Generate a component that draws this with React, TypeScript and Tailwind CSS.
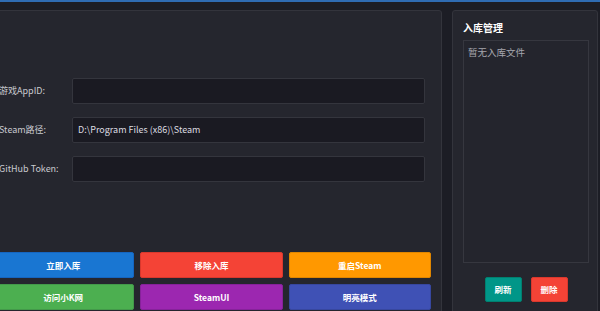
import React from "react";

const font = { fontFamily: '"Noto Sans CJK SC", "Noto Sans", sans-serif' };

function Field({ label, value }: { label: string; value?: string }) {
  return (
    <div className="flex items-center">
      <label className="w-[73px] text-[9px] text-[#c9cad0]">{label}</label>
      <div className="flex-1 h-[26px] bg-[#1a1a22] border border-[#34353d] rounded-[2px] flex items-center px-[5px] text-[9px] text-[#dcdce0]">
        {value}
      </div>
    </div>
  );
}

const actions = [
  { text: "立即入库", cls: "bg-[#1976d2] border-[#1565c0]" },
  { text: "移除入库", cls: "bg-[#f44336] border-[#d9382d]" },
  { text: "重启Steam", cls: "bg-[#ff9800] border-[#e08600]" },
  { text: "访问小K网", cls: "bg-[#4caf50] border-[#43994a]" },
  { text: "SteamUI", cls: "bg-[#9c27b0] border-[#86229a]" },
  { text: "明亮模式", cls: "bg-[#3f51b5] border-[#37479f]" },
];

export default function App() {
  return (
    <div
      className="w-[600px] h-[311px] overflow-hidden bg-[#1c1d25] border-t-2 border-[#2f6cb3] pt-[8px]"
      style={font}
    >
      <div className="flex gap-[10px] h-[320px]">
        {/* main form panel */}
        <div className="-ml-[20px] w-[462px] shrink-0 bg-[#25262e] border border-[#33343c] rounded-[3px] pl-[11px] pr-[10px] pt-[67px]">
          <div className="flex flex-col gap-[13px] pl-[7px] mr-[6px]">
            <Field label="游戏AppID:" />
            <Field label="Steam路径:" value="D:\Program Files (x86)\Steam" />
            <Field label="GitHub Token:" />
          </div>
          <div className="grid grid-cols-3 gap-[6px] mt-[70px]">
            {actions.map((a) => (
              <button
                key={a.text}
                className={`h-[26px] border rounded-[2px] text-white text-[8.5px] font-bold ${a.cls}`}
              >
                {a.text}
              </button>
            ))}
          </div>
        </div>

        {/* library panel */}
        <div className="w-[146px] shrink-0 bg-[#25262e] border border-[#33343c] rounded-[3px] pl-[10px] pr-[8px] pt-[10px] flex flex-col">
          <div className="text-[10px] leading-[14px] font-bold text-white mb-[5px]">入库管理</div>
          <div className="h-[223px] border border-[#36373f] bg-[#24252d] px-[4px] pt-[4px] text-[9.5px] text-[#a6a7ad]">
            暂无入库文件
          </div>
          <div className="flex justify-center gap-[9px] mt-[14px]">
            <button className="w-[37px] h-[25px] bg-[#009688] border border-[#00806f] rounded-[2px] text-white text-[8.5px] font-bold">
              刷新
            </button>
            <button className="w-[37px] h-[25px] bg-[#f44336] border border-[#d9382d] rounded-[2px] text-white text-[8.5px] font-bold">
              删除
            </button>
          </div>
        </div>
      </div>
    </div>
  );
}
